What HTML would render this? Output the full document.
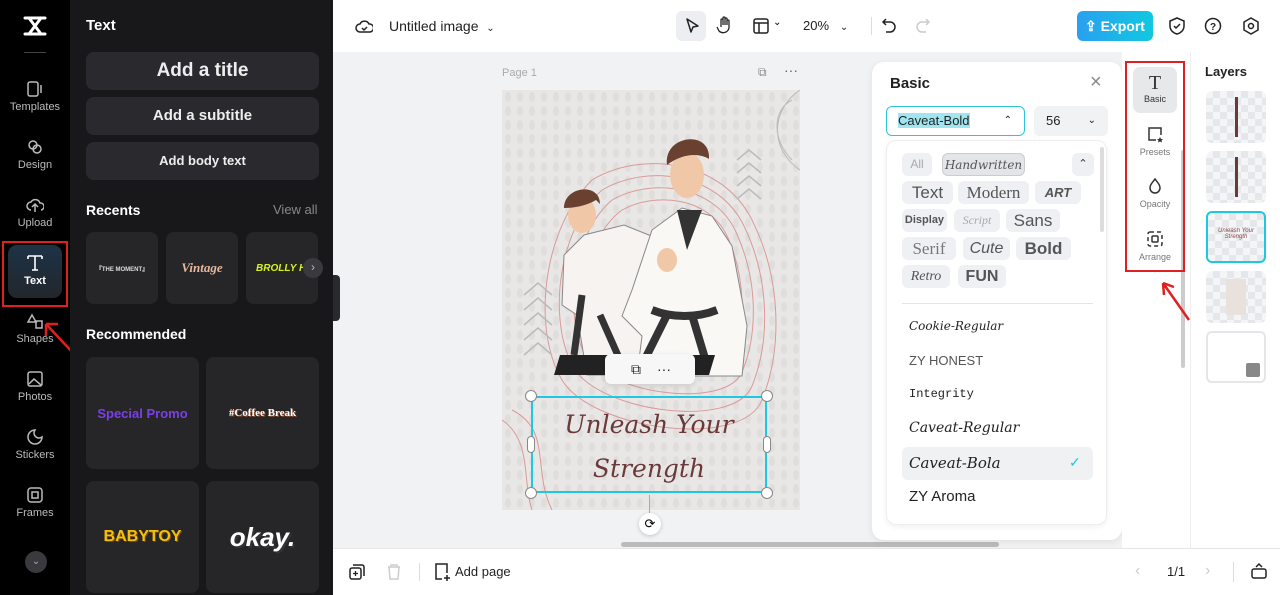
<!DOCTYPE html>
<html><head><meta charset="utf-8"><style>
*{box-sizing:border-box;margin:0;padding:0}
body{width:1280px;height:595px;overflow:hidden;font-family:"Liberation Sans",sans-serif;background:#f1f2f4;position:relative}
.abs{position:absolute}
.rail{left:0;top:0;width:70px;height:595px;background:#000}
.ri{position:absolute;left:0;width:70px;text-align:center;color:#bbb;font-size:11px}
.ri svg{display:block;margin:0 auto 3px}
.panel{left:70px;top:0;width:263px;height:595px;background:#18181b;color:#fff}
.btn{position:absolute;left:16px;width:233px;background:#2a2a2e;border-radius:8px;text-align:center;font-weight:bold;color:#eee}
.card{position:absolute;background:#262629;border-radius:8px;display:flex;align-items:center;justify-content:center;font-weight:bold}
.top{left:333px;top:0;width:947px;height:52px;background:#fff}
.bot{left:333px;top:548px;width:947px;height:47px;background:#fff;border-top:1px solid #e6e6e6}
.basic{left:872px;top:62px;width:250px;height:478px;background:#fff;border-radius:12px;box-shadow:0 2px 8px rgba(0,0,0,.08)}
.chip{position:absolute;background:#eef0f3;border-radius:6px;color:#555;text-align:center;height:23px;line-height:23px}
.fi{position:absolute;left:22px;color:#222;font-family:"DejaVu Serif",serif;font-style:italic}
.tool{position:absolute;left:1133px;width:44px;text-align:center;font-size:9px;color:#777}
.lay{position:absolute;left:1206px;width:60px;height:52px;border-radius:6px;background:
 repeating-conic-gradient(#e6e7ea 0 25%,#f4f5f7 0 50%) 0 0/14px 14px}
</style></head><body>
<div class="abs rail">
 <svg class="abs" style="left:23px;top:15px" width="24" height="22" viewBox="0 0 24 22"><path d="M2 3h20M2 19h20M6 3l12 16M18 3L6 19" stroke="#fff" stroke-width="3" fill="none" stroke-linecap="round"/></svg>
 <div class="abs" style="left:24px;top:52px;width:22px;height:1px;background:#444"></div>
 <div class="ri" style="top:80px"><svg width="18" height="18"><rect x="2" y="2" width="10" height="14" rx="2" stroke="#bbb" fill="none" stroke-width="1.5"/><path d="M15 5v8" stroke="#bbb" stroke-width="1.5"/></svg>Templates</div>
 <div class="ri" style="top:138px"><svg width="18" height="18"><circle cx="7" cy="7" r="4" stroke="#bbb" fill="none" stroke-width="1.5"/><circle cx="11" cy="11" r="4" stroke="#bbb" fill="none" stroke-width="1.5"/></svg>Design</div>
 <div class="ri" style="top:196px"><svg width="18" height="18"><path d="M5 14a4 4 0 010-8 5 5 0 019 1 3.5 3.5 0 011 7M9 16V9M6 11l3-3 3 3" stroke="#bbb" fill="none" stroke-width="1.5"/></svg>Upload</div>
 <div class="abs" style="left:2px;top:241px;width:66px;height:66px;border:2px solid #e02020"></div>
 <div class="abs" style="left:8px;top:245px;width:54px;height:53px;border-radius:9px;background:linear-gradient(#1d3346,#22262c)"></div>
 <div class="ri" style="top:252px;color:#fff;font-weight:bold"><svg width="20" height="20"><path d="M3 4h14M10 4v14M7 18h6M3 4v3M17 4v3" stroke="#fff" fill="none" stroke-width="1.6"/></svg>Text</div>
 <div class="ri" style="top:312px"><svg width="18" height="18"><path d="M6 3l-4 7h8zM10 9h6v7h-6z" stroke="#bbb" fill="none" stroke-width="1.5"/></svg>Shapes</div>
 <div class="ri" style="top:370px"><svg width="18" height="18"><rect x="2" y="2" width="14" height="14" rx="2" stroke="#bbb" fill="none" stroke-width="1.5"/><path d="M3 14l5-5 7 6" stroke="#bbb" fill="none" stroke-width="1.5"/></svg>Photos</div>
 <div class="ri" style="top:428px"><svg width="18" height="18"><path d="M9 2a7 7 0 107 7 5 5 0 01-7-7z" stroke="#bbb" fill="none" stroke-width="1.5"/></svg>Stickers</div>
 <div class="ri" style="top:486px"><svg width="18" height="18"><rect x="2" y="2" width="14" height="14" rx="3" stroke="#bbb" fill="none" stroke-width="1.5"/><rect x="6" y="6" width="6" height="6" stroke="#bbb" fill="none" stroke-width="1.5"/></svg>Frames</div>
 <div class="abs" style="left:25px;top:551px;width:22px;height:22px;border-radius:50%;background:#3a3a3e;color:#aaa;font-size:10px;text-align:center;line-height:22px">⌄</div>
</div>
<svg class="abs" style="left:30px;top:308px" width="50" height="50"><path d="M44 46L16 16M16 16l0 12M16 16l12 0" stroke="#e02020" stroke-width="2.5" fill="none"/></svg>
<div class="abs panel">
 <div class="abs" style="left:16px;top:17px;font-size:15px;font-weight:bold">Text</div>
 <div class="btn" style="top:52px;height:38px;line-height:38px;font-size:19px">Add a title</div>
 <div class="btn" style="top:97px;height:38px;line-height:38px;font-size:15px">Add a subtitle</div>
 <div class="btn" style="top:142px;height:38px;line-height:38px;font-size:13px">Add body text</div>
 <div class="abs" style="left:16px;top:202px;font-size:14px;font-weight:bold">Recents</div>
 <div class="abs" style="left:203px;top:202px;font-size:13px;color:#888">View all</div>
 <div class="card" style="left:16px;top:232px;width:72px;height:72px;font-size:6px;color:#ddd">『THE MOMENT』</div>
 <div class="card" style="left:96px;top:232px;width:72px;height:72px;font-size:13px;color:#e8b89a;font-family:'Liberation Serif',serif;font-style:italic">Vintage</div>
 <div class="card" style="left:176px;top:232px;width:72px;height:72px;font-size:10px;color:#d8f020;font-style:italic;overflow:hidden;justify-content:flex-start;padding-left:10px">BROLLY HO</div>
 <div class="abs" style="left:233px;top:258px;width:20px;height:20px;border-radius:50%;background:#3a3a3e;color:#bbb;font-size:12px;text-align:center;line-height:19px">›</div>
 <div class="abs" style="left:16px;top:326px;font-size:14px;font-weight:bold">Recommended</div>
 <div class="card" style="left:16px;top:357px;width:113px;height:112px;color:#7b3fe8;font-size:13px">Special Promo</div>
 <div class="card" style="left:136px;top:357px;width:113px;height:112px;color:#fff;font-size:11px;font-family:'Liberation Serif',serif;text-shadow:1px 1px 0 #8a4a2a">#Coffee Break</div>
 <div class="card" style="left:16px;top:481px;width:113px;height:112px;color:#f3c010;font-size:16px;text-shadow:1px 1px 0 #7a4a00">BABYTOY</div>
 <div class="card" style="left:136px;top:481px;width:113px;height:112px;color:#fff;font-size:26px;font-style:italic;text-shadow:2px 2px 0 #333">okay.</div>
</div>
<div class="abs" style="left:333px;top:275px;width:7px;height:46px;background:#2a2a2e;border-radius:0 4px 4px 0"></div>
<div class="abs top">
 <svg class="abs" style="left:22px;top:17px" width="18" height="18"><path d="M5 15a4 4 0 010-8 5 5 0 019 0 3.5 3.5 0 011 8zM7 11l2 2 3-3" stroke="#222" fill="none" stroke-width="1.5"/></svg>
 <div class="abs" style="left:56px;top:18px;font-size:14px;color:#222">Untitled image &nbsp;<span style="font-size:10px">⌄</span></div>
 <div class="abs" style="left:343px;top:11px;width:30px;height:30px;border-radius:6px;background:#eceef1"></div>
 <svg class="abs" style="left:350px;top:17px" width="18" height="18"><path d="M4 2l11 7-5 1-2 5z" stroke="#222" fill="none" stroke-width="1.5" stroke-linejoin="round"/></svg>
 <svg class="abs" style="left:383px;top:16px" width="18" height="20"><path d="M5 11V4a1 1 0 012 0v5M7 9V2a1 1 0 012 0v7M9 9V3a1 1 0 012 0v6M11 9V5a1 1 0 012 0v7a6 6 0 01-10 3l-2-4" stroke="#222" fill="none" stroke-width="1.3"/></svg>
 <svg class="abs" style="left:420px;top:18px" width="16" height="16"><rect x="1" y="1" width="14" height="14" rx="2" stroke="#222" fill="none" stroke-width="1.5"/><path d="M1 5h14M6 5v10" stroke="#222" stroke-width="1.5"/></svg>
 <div class="abs" style="left:440px;top:17px;font-size:10px">⌄</div>
 <div class="abs" style="left:470px;top:18px;font-size:13px;color:#222">20% &nbsp;&nbsp;<span style="font-size:10px">⌄</span></div>
 <div class="abs" style="left:538px;top:17px;width:1px;height:18px;background:#ddd"></div>
 <svg class="abs" style="left:548px;top:17px" width="16" height="18"><path d="M5 2L2 5l3 3M2 5h7a4 4 0 010 10H5" stroke="#222" fill="none" stroke-width="1.5"/></svg>
 <svg class="abs" style="left:582px;top:17px" width="16" height="18"><path d="M11 2l3 3-3 3M14 5H7a4 4 0 000 10h4" stroke="#ccc" fill="none" stroke-width="1.5"/></svg>
 <div class="abs" style="left:744px;top:11px;width:76px;height:30px;border-radius:6px;background:linear-gradient(90deg,#2aa0f0,#10c8e0);color:#fff;font-size:14px;font-weight:bold;line-height:30px;text-align:center">⇪ Export</div>
 <svg class="abs" style="left:835px;top:17px" width="18" height="18"><path d="M9 1l7 3v5c0 4-3 7-7 8-4-1-7-4-7-8V4zM6 9l2 2 4-4" stroke="#222" fill="none" stroke-width="1.5"/></svg>
 <svg class="abs" style="left:871px;top:17px" width="18" height="18"><circle cx="9" cy="9" r="7.5" stroke="#222" fill="none" stroke-width="1.5"/><text x="9" y="13" font-size="10" text-anchor="middle" font-weight="bold" fill="#222">?</text></svg>
 <svg class="abs" style="left:909px;top:17px" width="18" height="18"><path d="M9 1l7 4v8l-7 4-7-4V5z" stroke="#222" fill="none" stroke-width="1.5"/><circle cx="9" cy="9" r="2.5" stroke="#222" fill="none" stroke-width="1.5"/></svg>
</div>
<!-- canvas -->
<div class="abs" style="left:502px;top:67px;font-size:11px;color:#aaa">Page 1</div>
<div class="abs" style="left:758px;top:65px;font-size:12px;color:#888">⧉</div>
<div class="abs" style="left:784px;top:62px;font-size:14px;color:#666">···</div>
<div class="abs" style="left:502px;top:90px;width:298px;height:420px;background:#e9e7e5;overflow:hidden">
 <svg width="298" height="420">
  <defs><pattern id="dp" width="12" height="14" patternUnits="userSpaceOnUse"><ellipse cx="6" cy="7" rx="3" ry="5" fill="#e0dedc"/></pattern></defs>
  <rect width="298" height="420" fill="url(#dp)"/>
  <g fill="none" stroke="#d99a98" stroke-width="1">
   <path d="M90 90c50-30 130-20 160 40s30 130 10 180-170 30-200-20-20-150 30-200z"/>
   <path d="M100 100c44-26 116-18 142 36s26 116 8 160-152 26-178-18-18-136 28-178z"/>
   <path d="M110 110c38-22 102-16 124 32s22 102 6 140-134 22-156-16-16-120 26-156z"/>
   <path d="M120 120c32-18 88-14 106 28s18 88 4 120-116 18-136-14-14-104 26-134z"/>
   <path d="M0 330c30 20 20 60 30 90M10 320c40 20 20 60 40 100"/>
   <path d="M290 10c-20 10-20 40 0 60M298 0c-30 20-30 60 0 80" stroke="#bbb"/>
  </g>
  <g fill="none" stroke="#bbb" stroke-width="1.5">
   <path d="M22 205l14-12 14 12M22 220l14-12 14 12M22 235l14-12 14 12M22 250l14-12 14 12M22 265l14-12 14 12"/>
   <path d="M235 70l12-10 12 10M235 83l12-10 12 10M235 96l12-10 12 10M235 109l12-10 12 10"/>
  </g>
  <!-- left fighter -->
  <path d="M62 165l20-20 40-10 50 20 10 40-30 30-10 60H85l-10-60-15-10z" fill="#f6f3f0" stroke="#888"/>
  <path d="M80 205l-8 60M98 225l20 45" stroke="#333" stroke-width="7"/>
  <ellipse cx="80" cy="125" rx="14" ry="18" fill="#f0c8a8"/>
  <path d="M62 118c0-22 36-26 36-4l-4-4c-10 6-22 8-32 8z" fill="#6a4030"/>
  <!-- right fighter -->
  <path d="M130 200l20-60 30-22 30 8 20 30 15 80-5 50H135l5-40-20-20z" fill="#faf8f5" stroke="#888"/>
  <path d="M175 120l10 40 15-40" fill="#333"/>
  <path d="M150 220c20 8 45 8 65 0M165 225l-25 50M190 225l15 50" stroke="#333" stroke-width="8" fill="none"/>
  <ellipse cx="185" cy="85" rx="17" ry="23" fill="#f0c8a8"/>
  <path d="M165 75c-4-30 44-36 42-6-10-6-26-6-42 6z" fill="#6a4030"/>
  <ellipse cx="165" cy="170" rx="10" ry="12" fill="#f0c8a8"/>
  <path d="M58 265h155l-6 20H52z" fill="#222"/>
 </svg>
</div>
<div class="abs" style="left:605px;top:354px;width:90px;height:30px;background:#f7f7f8;border-radius:6px;box-shadow:0 2px 6px rgba(0,0,0,.12);font-size:14px;color:#222;line-height:30px"><span style="margin-left:26px">⧉</span><span style="margin-left:16px">···</span></div>
<div class="abs" style="left:531px;top:396px;width:236px;height:97px;border:2px solid #1ec8e0"></div>
<div class="abs" style="left:531px;top:403px;width:236px;text-align:center;font-family:'DejaVu Serif',serif;font-style:italic;font-size:25px;line-height:44px;color:#6a3a3a">Unleash Your<br>Strength</div>
<div class="abs" style="left:525px;top:390px;width:12px;height:12px;border-radius:50%;background:#fff;border:1px solid #888"></div>
<div class="abs" style="left:761px;top:390px;width:12px;height:12px;border-radius:50%;background:#fff;border:1px solid #888"></div>
<div class="abs" style="left:525px;top:487px;width:12px;height:12px;border-radius:50%;background:#fff;border:1px solid #888"></div>
<div class="abs" style="left:761px;top:487px;width:12px;height:12px;border-radius:50%;background:#fff;border:1px solid #888"></div>
<div class="abs" style="left:527px;top:436px;width:8px;height:17px;border-radius:4px;background:#fff;border:1px solid #888"></div>
<div class="abs" style="left:763px;top:436px;width:8px;height:17px;border-radius:4px;background:#fff;border:1px solid #888"></div>
<div class="abs" style="left:649px;top:495px;width:1px;height:18px;background:#aaa"></div>
<div class="abs" style="left:639px;top:513px;width:22px;height:22px;border-radius:50%;background:#fff;box-shadow:0 1px 4px rgba(0,0,0,.2);text-align:center;line-height:22px;font-size:13px">⟳</div>
<div class="abs" style="left:621px;top:542px;width:378px;height:5px;border-radius:3px;background:#bbb"></div>
<!-- basic panel -->
<div class="abs basic">
 <div class="abs" style="left:18px;top:13px;font-size:15px;font-weight:bold;color:#222">Basic</div>
 <div class="abs" style="left:218px;top:9px;font-size:20px;color:#888">×</div>
 <div class="abs" style="left:14px;top:44px;width:139px;height:30px;border:1.5px solid #2cc4dc;border-radius:6px;font-size:13px;line-height:27px;padding-left:11px;color:#222"><span style="background:#9fe6f0">Caveat-Bold</span><span style="position:absolute;right:12px;font-size:10px">⌃</span></div>
 <div class="abs" style="left:162px;top:44px;width:74px;height:30px;background:#f1f2f4;border-radius:6px;font-size:13px;line-height:30px;padding-left:12px;color:#222">56<span style="position:absolute;right:12px;font-size:10px">⌄</span></div>
 <div class="abs" style="left:14px;top:78px;width:221px;height:385px;border:1px solid #eee;border-radius:10px;box-shadow:0 2px 6px rgba(0,0,0,.06)"></div>
 <div class="abs" style="left:228px;top:85px;width:4px;height:85px;background:#ddd;border-radius:2px"></div>
 <div class="chip" style="left:30px;top:91px;width:30px;font-size:12px;color:#aaa">All</div>
 <div class="chip" style="left:70px;top:91px;width:83px;font-size:12px;font-style:italic;background:#e3e5e8;border:1px solid #ccc;font-family:'DejaVu Serif',serif">Handwritten</div>
 <div class="chip" style="left:200px;top:91px;width:22px;font-size:11px;color:#333">⌃</div>
 <div class="chip" style="left:30px;top:119px;width:51px;font-size:17px">Text</div>
 <div class="chip" style="left:86px;top:119px;width:71px;font-size:17px;font-family:'Liberation Serif',serif">Modern</div>
 <div class="chip" style="left:163px;top:119px;width:46px;font-size:13px;font-weight:bold;font-style:italic">ART</div>
 <div class="chip" style="left:30px;top:147px;width:45px;font-size:11px;font-weight:bold">Display</div>
 <div class="chip" style="left:82px;top:147px;width:46px;font-size:12px;font-style:italic;color:#aaa;font-family:'Liberation Serif',serif">Script</div>
 <div class="chip" style="left:134px;top:147px;width:54px;font-size:17px">Sans</div>
 <div class="chip" style="left:30px;top:175px;width:54px;font-size:17px;font-family:'Liberation Serif',serif;color:#777">Serif</div>
 <div class="chip" style="left:91px;top:175px;width:47px;font-size:16px;font-style:italic">Cute</div>
 <div class="chip" style="left:144px;top:175px;width:55px;font-size:17px;font-weight:bold">Bold</div>
 <div class="chip" style="left:30px;top:203px;width:48px;font-size:14px;font-style:italic;font-family:'Liberation Serif',serif">Retro</div>
 <div class="chip" style="left:86px;top:203px;width:48px;font-size:16px;font-weight:bold">FUN</div>
 <div class="abs" style="left:30px;top:241px;width:191px;height:1px;background:#e5e5e5"></div>
 <div class="fi" style="left:37px;top:257px;font-size:12px">Cookie-Regular</div>
 <div class="fi" style="left:37px;top:291px;font-size:13px;font-style:normal;font-family:'Liberation Sans',sans-serif;color:#555">ZY HONEST</div>
 <div class="fi" style="left:37px;top:325px;font-size:12px;font-style:normal;font-family:'Liberation Mono',monospace">Integrity</div>
 <div class="fi" style="left:37px;top:358px;font-size:14px">Caveat-Regular</div>
 <div class="abs" style="left:30px;top:385px;width:191px;height:33px;background:#eff1f3;border-radius:6px"></div>
 <div class="fi" style="left:37px;top:392px;font-size:15px">Caveat-Bola</div>
 <div class="abs" style="left:197px;top:392px;color:#1ec8e0;font-size:14px">✓</div>
 <div class="fi" style="left:37px;top:426px;font-size:15px;font-style:normal;font-family:'Liberation Sans',sans-serif">ZY Aroma</div>
</div>
<!-- tool column -->
<div class="abs" style="left:1122px;top:52px;width:68px;height:496px;background:#fff"></div>
<div class="abs" style="left:1181px;top:150px;width:4px;height:218px;background:#ccc;border-radius:2px"></div>
<div class="abs" style="left:1125px;top:61px;width:60px;height:211px;border:2px solid #e02020"></div>
<div class="abs" style="left:1133px;top:67px;width:44px;height:46px;border-radius:7px;background:#e7e8ea"></div>
<div class="tool" style="top:72px;color:#333"><div style="font-size:20px;font-family:'Liberation Serif',serif;line-height:22px">T</div>Basic</div>
<div class="tool" style="top:125px"><svg width="18" height="18" style="display:block;margin:0 auto 4px"><path d="M10 15H3V3h12v7" stroke="#333" fill="none" stroke-width="1.5"/><path d="M14 12l1 2 2 0-1.5 1.5.5 2-2-1-2 1 .5-2L11 14h2z" fill="#333"/></svg>Presets</div>
<div class="tool" style="top:177px"><svg width="18" height="18" style="display:block;margin:0 auto 4px"><path d="M9 2c3 4 5 6 5 9a5 5 0 01-10 0c0-3 2-5 5-9z" stroke="#333" fill="none" stroke-width="1.5"/></svg>Opacity</div>
<div class="tool" style="top:230px"><svg width="18" height="18" style="display:block;margin:0 auto 4px"><rect x="2" y="2" width="14" height="14" rx="2" stroke="#333" fill="none" stroke-width="1.5" stroke-dasharray="4 3"/><rect x="6" y="6" width="6" height="6" rx="1" stroke="#333" fill="none" stroke-width="1.5"/></svg>Arrange</div>
<svg class="abs" style="left:1155px;top:275px" width="40" height="50"><path d="M34 45L8 8M8 8l1 12M8 8l11 4" stroke="#e02020" stroke-width="2.5" fill="none"/></svg>
<!-- layers -->
<div class="abs" style="left:1190px;top:52px;width:90px;height:496px;background:#fff;border-left:1px solid #eee"></div>
<div class="abs" style="left:1205px;top:64px;font-size:13px;font-weight:bold;color:#222">Layers</div>
<div class="lay" style="top:91px"><div style="position:absolute;left:29px;top:6px;width:3px;height:40px;background:#6a3a3a"></div></div>
<div class="lay" style="top:151px"><div style="position:absolute;left:29px;top:6px;width:3px;height:40px;background:#6a3a3a"></div></div>
<div class="lay" style="top:211px;border:2px solid #1ec8e0;font-size:6px;color:#8a4a4a;font-style:italic;text-align:center;padding-top:15px">Unleash Your<br>Strength</div>
<div class="lay" style="top:271px"><div style="position:absolute;left:20px;top:8px;width:20px;height:36px;background:#e9e2dc"></div></div>
<div class="abs" style="left:1206px;top:331px;width:60px;height:52px;border-radius:6px;border:2px solid #e6e6e8;background:#fff"><div style="position:absolute;right:4px;bottom:4px;width:14px;height:14px;background:#888;border-radius:2px"></div></div>
<!-- bottom bar -->
<div class="abs bot">
 <svg class="abs" style="left:15px;top:14px" width="18" height="18"><rect x="2" y="5" width="11" height="11" rx="2" stroke="#222" fill="none" stroke-width="1.5"/><path d="M5 2h9a2 2 0 012 2v9" stroke="#222" fill="none" stroke-width="1.5"/><path d="M7.5 8v5M5 10.5h5" stroke="#222" stroke-width="1.3"/></svg>
 <svg class="abs" style="left:53px;top:14px" width="16" height="18"><path d="M2 4h12M5 4V2h6v2M3 4l1 12h8l1-12" stroke="#ccc" fill="none" stroke-width="1.5"/></svg>
 <div class="abs" style="left:86px;top:14px;width:1px;height:18px;background:#ddd"></div>
 <svg class="abs" style="left:100px;top:13px" width="18" height="20"><path d="M9 17H3V2h11v9" stroke="#222" fill="none" stroke-width="1.5"/><path d="M14 13v6M11 16h6" stroke="#222" stroke-width="1.5"/></svg>
 <div class="abs" style="left:122px;top:15px;font-size:13px;color:#222">Add page</div>
 <div class="abs" style="left:802px;top:13px;font-size:16px;color:#ccc">‹</div>
 <div class="abs" style="left:834px;top:15px;font-size:13px;color:#222">1/1</div>
 <div class="abs" style="left:872px;top:13px;font-size:16px;color:#ccc">›</div>
 <div class="abs" style="left:900px;top:13px;width:1px;height:20px;background:#ddd"></div>
 <svg class="abs" style="left:917px;top:13px" width="18" height="18"><rect x="2" y="7" width="14" height="9" rx="2" stroke="#222" fill="none" stroke-width="1.5"/><path d="M6 5l3-3 3 3" stroke="#222" fill="none" stroke-width="1.5"/></svg>
</div>
</body></html>
